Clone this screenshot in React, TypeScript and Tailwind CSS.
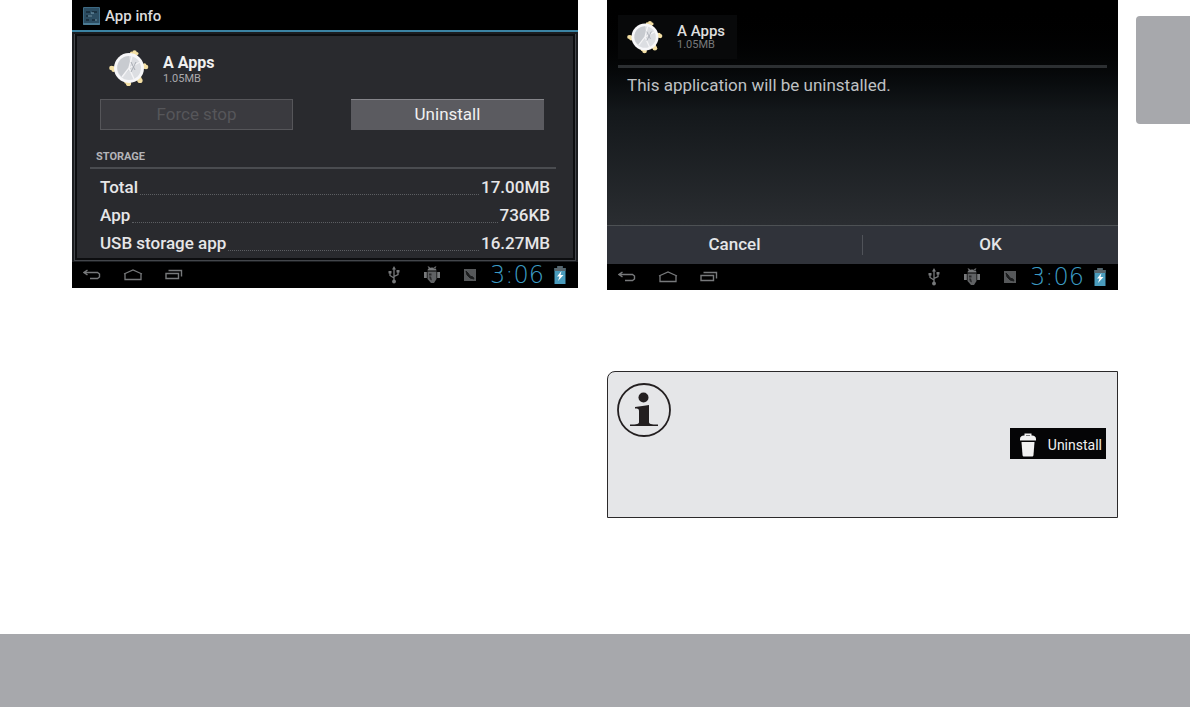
import type { ReactNode } from 'react';
import clsx from 'clsx';

const storageRows = [
  { label: 'Total', value: '17.00MB' },
  { label: 'App', value: '736KB' },
  { label: 'USB storage app', value: '16.27MB' },
];

function WatchIcon({ className }: { className?: string }) {
  return (
    <svg viewBox="0 0 40 38" className={className} aria-hidden="true">
      <g fill="#f3dfa4">
        <circle cx="25.500" cy="3.500" r="2.300" />
        <circle cx="22.500" cy="4" r="1.500" />
        <circle cx="28" cy="4.500" r="1.500" />
        <circle cx="2.500" cy="19" r="2.300" />
        <circle cx="4.500" cy="21" r="2" />
        <circle cx="37" cy="18" r="2.300" />
        <circle cx="35.500" cy="16" r="1.800" />
        <circle cx="19.500" cy="34.500" r="2.600" />
        <circle cx="17" cy="33" r="1.800" />
        <circle cx="31" cy="31.500" r="2.600" />
        <path d="M22 5h6l-1 6h-4zM3 17l6 1v4l-6-1zM37 15v5l-6-1v-4zM16 30h7l-2 5h-3zM27 28l5-1 1 5-4 1z" />
      </g>
      <circle cx="20" cy="19" r="15" fill="#f7f7f9" />
      <circle cx="20" cy="19" r="12" fill="#dcdee2" />
      <path d="M12 10a12 12 0 0 1 8-3l2 12-9 9a12 12 0 0 1-1-18z" fill="#c8cbd0" />
      <path
        d="M20 19l3-12M20 19l11-6M20 19l5 11M20 19l-7 9"
        stroke="#f4f4f6"
        strokeWidth="1.400"
        fill="none"
      />
      <path d="M22 13l4 8M27 13l-5 10" stroke="#a9adb4" strokeWidth="1" />
    </svg>
  );
}

function SettingsIcon() {
  return (
    <svg viewBox="0 0 17 18" className="h-[18px] w-[17px]" aria-hidden="true">
      <rect width="17" height="18" rx="1" fill="#3d6a84" />
      <rect x="1" y="1" width="15" height="15" fill="#2c4d62" />
      <path d="M3 5h4M9 5h5M3 9h6M3 13h3M9 13h5" stroke="#1b3242" strokeWidth="2" />
      <path d="M5 9h4M8 6h3M12 13h2" stroke="#7ea6ba" strokeWidth="1" />
      <path d="M0 17h17" stroke="#5b8ba4" />
    </svg>
  );
}

function BackIcon() {
  return (
    <svg viewBox="0 0 18 12" className="h-3 w-[18px]" fill="none" stroke="currentColor" aria-hidden="true">
      <path d="M4.500 1L1 3.500 4.500 6M1 3.500h13.500l2 1.500v3l-2 1.500H7" strokeWidth="1.400" />
    </svg>
  );
}

function HomeIcon() {
  return (
    <svg viewBox="0 0 20 12" className="h-3 w-5" fill="none" stroke="currentColor" aria-hidden="true">
      <path d="M1 5l9-4 9 4M2 4.500V10.500h16V4.500" strokeWidth="1.300" />
    </svg>
  );
}

function RecentIcon() {
  return (
    <svg viewBox="0 0 18 12" className="h-3 w-[18px]" fill="none" stroke="currentColor" aria-hidden="true">
      <path d="M1 4.500h12.500v5H1zM3.500 1.500h13v6" strokeWidth="1.400" />
    </svg>
  );
}

function UsbIcon() {
  return (
    <svg viewBox="0 0 12 18" className="h-[18px] w-3" fill="none" stroke="#77797b" aria-hidden="true">
      <path d="M6 3v12M6 12L2 9.500V6M6 10.500l4-2V5.500" strokeWidth="1.300" />
      <path d="M6 0l2 3.500H4z" fill="#77797b" stroke="none" />
      <circle cx="6" cy="15.500" r="1.900" fill="#77797b" stroke="none" />
      <path d="M.5 5h3v2.500h-3zM8.500 4h3v2.500h-3z" fill="#77797b" stroke="none" />
    </svg>
  );
}

function DebugIcon() {
  return (
    <svg viewBox="0 0 16 18" className="h-[18px] w-4" fill="#77797b" aria-hidden="true">
      <path d="M3.500 4.500C3.500 2.500 5.500 1.500 8 1.500s4.500 1 4.500 3zM3.500.5h1.500l1.500 2H5zM12.500.5H11l-1.500 2H11z" />
      <path d="M3.500 5.500h9V13L10 17H7l-3.500-4z" fill="#606264" />
      <path d="M0 6h2.800v6H0zM13.200 6H16v6h-2.800z" />
      <path d="M5 7.500h2.500v2H5zM5 10.500h2l1 4-2-1z" fill="#2a2b2c" />
    </svg>
  );
}

function PictureIcon() {
  return (
    <svg viewBox="0 0 12 12" className="h-3 w-3" aria-hidden="true">
      <path d="M0 0h12v12H0z" fill="#56585a" />
      <path d="M2 2l1 4 3 3 4 1-1-2-3-1-2-3z" fill="#1b1c1d" stroke="#1b1c1d" strokeWidth="1" />
    </svg>
  );
}

function BatteryIcon() {
  return (
    <svg viewBox="0 0 12 18" className="h-[18px] w-3" aria-hidden="true">
      <path d="M3.500 0h5v2H11.500v16H.5V2h3z" fill="#4a9cbd" />
      <path d="M3.500 0h5v2H11.500v3H.5V2h3z" fill="#59666d" />
      <path d="M7.500 5L3 10.500h2.500L4 15l5.500-6H6.500z" fill="#fff" />
    </svg>
  );
}

function InfoIcon() {
  return (
    <svg viewBox="0 0 54 54" className="h-[54px] w-[54px] shrink-0" aria-hidden="true">
      <circle cx="27" cy="27" r="26" fill="none" stroke="#231f20" strokeWidth="1.800" />
      <circle cx="26.500" cy="14.500" r="5" fill="#231f20" />
      <path
        d="M18 24c5-.5 10-1.500 14-2v17c0 2 2 2.500 9 2.500V43H13v-1.500c7 0 9-.5 9-2.500V28c0-2-1-2.500-4-2.500z"
        fill="#231f20"
      />
    </svg>
  );
}

function TrashIcon() {
  return (
    <svg viewBox="0 0 16 24" className="h-6 w-4" fill="#f1f1f1" aria-hidden="true">
      <path d="M4.500 3V.5h7V3H10V2H6v1z" />
      <path d="M0 6c0-2 1.500-3.500 4-3.500h8c2.500 0 4 1.500 4 3.500v1.500H0z" />
      <path d="M1.500 9h13l-1 13c-.1 1-.8 1.500-1.500 1.500H4c-.7 0-1.400-.5-1.500-1.500z" />
    </svg>
  );
}

function SystemBar() {
  return (
    <div className="flex h-[26px] items-center bg-black pr-3 pl-[11px] text-[#77797b]">
      <div className="flex items-center gap-[22px]">
        <button type="button" aria-label="Back">
          <BackIcon />
        </button>
        <button type="button" aria-label="Home">
          <HomeIcon />
        </button>
        <button type="button" aria-label="Recent apps">
          <RecentIcon />
        </button>
      </div>
      <div className="ml-auto flex items-center">
        <div className="mr-3.5 flex items-center gap-6">
          <UsbIcon />
          <DebugIcon />
          <PictureIcon />
        </div>
        <span className="mr-2.5 font-['DejaVu_Sans'] text-2xl leading-6 font-extralight text-[#3c9cc4]">3:06</span>
        <BatteryIcon />
      </div>
    </div>
  );
}

function DialogButton({ children, className }: { children: ReactNode; className?: string }) {
  return (
    <button type="button" className={clsx('h-[38px] flex-1 text-[17px] font-medium text-[#e4e6e8]', className)}>
      {children}
    </button>
  );
}

function AppInfoScreen() {
  return (
    <section className="bg-black">
      <header className="flex h-8 items-center gap-[5px] border-b-2 border-[#3b83a3] pt-0.5 pl-[11px]">
        <SettingsIcon />
        <h1 className="text-[15px] font-medium text-[#dcdcdc]">App info</h1>
      </header>

      <div className="border-x-2 border-t-2 border-b border-[#1b1d20] bg-[#43464b] px-px pb-px">
        <div className="border-2 border-[#0c0d0f] bg-[#292a2e]">
          <div className="flex h-[63px] items-center gap-3.5 pl-8">
            <WatchIcon className="h-[38px] w-10" />
            <div className="pt-1">
              <h2 className="text-base leading-[18px] font-bold text-[#f0f0f0]">A Apps</h2>
              <p className="text-[11px] leading-[14px] text-[#a9a9ac]">1.05MB</p>
            </div>
          </div>

          <div className="grid grid-cols-2 gap-[58px] pr-[29px] pl-[23px]">
            <button
              type="button"
              disabled
              className="h-[31px] border border-[#56565a] bg-[#3a3a3f] text-[17px] text-[#56565a]"
            >
              Force stop
            </button>
            <button
              type="button"
              className="h-[31px] border-t border-[#85858a] bg-[#5b5b60] text-[17px] text-[#f0f0f0]"
            >
              Uninstall
            </button>
          </div>

          <div className="mt-5 mr-[17px] ml-[13px]">
            <h3 className="border-b-2 border-[#4a4c50] pb-[3px] pl-1.5 text-[11px] leading-[14px] font-bold text-[#b4b4b8]">
              STORAGE
            </h3>
            <dl className="pt-[5px] pr-1.5 pl-2.5">
              {storageRows.map((row) => (
                <div key={row.label} className="flex h-7 items-center text-[17px] font-medium text-[#e6e6e8]">
                  <dt>{row.label}</dt>
                  <span className="mx-0.5 h-3.5 flex-1 border-b border-dotted border-[#5c5e62]" />
                  <dd>{row.value}</dd>
                </div>
              ))}
            </dl>
          </div>
        </div>
      </div>

      <SystemBar />
    </section>
  );
}

function UninstallScreen() {
  return (
    <section className="bg-black">
      <div className="flex min-h-[225px] flex-col bg-linear-to-b from-black via-[#14181b] to-[#2a2d31] px-[11px] pt-[15px]">
        <div className="flex h-11 items-center gap-3.5 self-start bg-[#08090a] pr-3 pl-[9px]">
          <WatchIcon className="h-9 w-9" />
          <div>
            <h2 className="text-[15px] leading-4 font-medium text-[#dedede]">A Apps</h2>
            <p className="text-[11px] leading-3 text-[#77797b]">1.05MB</p>
          </div>
        </div>
        <div className="mt-1.5 h-[3px] bg-[#2c2f32]" />
        <p className="pt-[5px] pl-[9px] text-[17px] text-[#bfc1c3]">This application will be uninstalled.</p>
      </div>

      <div className="flex items-center border-t border-[#4d5154] bg-[#30333a]">
        <DialogButton>Cancel</DialogButton>
        <div className="h-5 w-px bg-[#505359]" />
        <DialogButton>OK</DialogButton>
      </div>

      <SystemBar />
    </section>
  );
}

function InfoNote() {
  return (
    <aside className="mt-[81px] flex min-h-[147px] items-start justify-between rounded-tl-lg border border-[#2b292a] bg-[#e5e6e8] pt-[11px] pr-[11px] pl-[9px]">
      <InfoIcon />
      <button
        type="button"
        className="mt-[45px] flex h-[31px] items-center gap-3 bg-[#050506] pt-0.5 pr-1 pl-2.5 text-sm text-[#f1f1f1]"
      >
        <TrashIcon />
        Uninstall
      </button>
    </aside>
  );
}

export default function App() {
  return (
    <div className="flex min-h-screen flex-col bg-white font-[Roboto,sans-serif]">
      <main className="flex flex-1 items-start pr-px pl-[72px]">
        <div className="grid flex-1 grid-cols-[506fr_511fr] items-start gap-[29px]">
          <AppInfoScreen />
          <div>
            <UninstallScreen />
            <InfoNote />
          </div>
        </div>
        <div className="mt-4 ml-[18px] h-[108px] w-[54px] rounded-l bg-[#a7a8ac]" />
      </main>
      <footer className="mr-px h-[73px] bg-[#a7a8ac]" />
    </div>
  );
}
